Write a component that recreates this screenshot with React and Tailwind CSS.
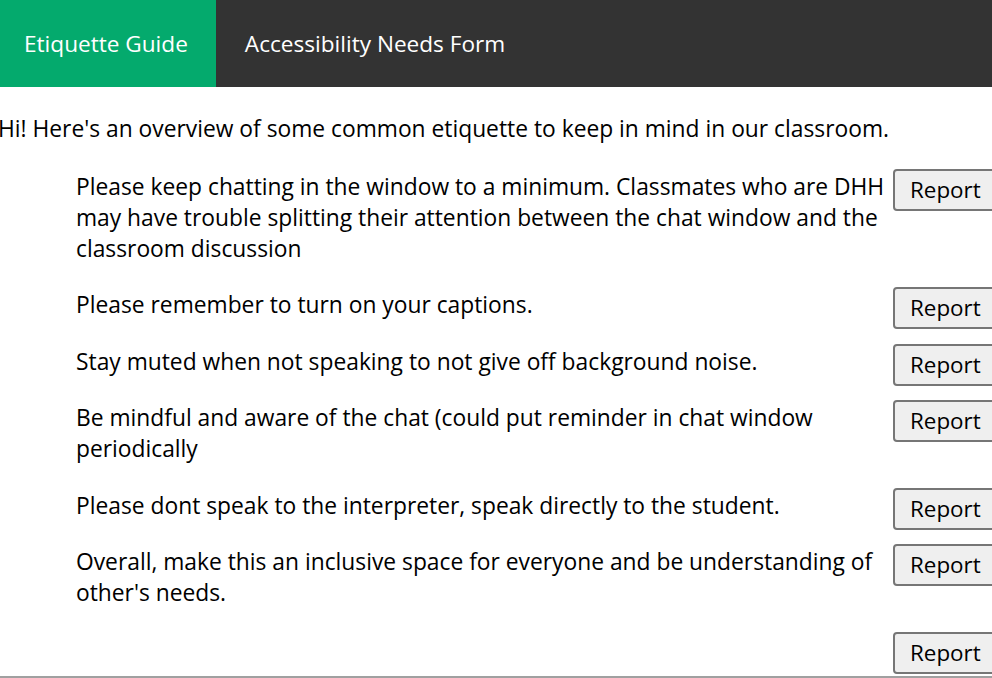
import React from 'react';

const rules = [
  "Please keep chatting in the window to a minimum. Classmates who are DHH may have trouble splitting their attention between the chat window and the classroom discussion",
  'Please remember to turn on your captions.',
  'Stay muted when not speaking to not give off background noise.',
  'Be mindful and aware of the chat (could put reminder in chat window periodically',
  'Please dont speak to the interpreter, speak directly to the student.',
  "Overall, make this an inclusive space for everyone and be understanding of other's needs.",
  '',
];

export default function App() {
  return (
    <div className="w-[992px] h-[678px] overflow-hidden bg-white text-black font-['Open_Sans',sans-serif]">
      <div className="ml-[-4px] w-[1000px]">
        <nav className="flex h-[87px] bg-[#333333]">
          <a className="flex items-center px-[28px] bg-[#04AA6D] text-white text-[22.6px]">Etiquette Guide</a>
          <a className="flex items-center px-[29px] text-white text-[22.6px]">Accessibility Needs Form</a>
        </nav>

        <p className="mt-[26px] pl-[2px] text-[22.8px] leading-[31px]">
          Hi! Here's an overview of some common etiquette to keep in mind in our classroom.
        </p>

        <ul className="mt-[26.5px] pl-[80px] flex flex-col gap-[25.5px]">
          {rules.map((text, i) => (
            <li key={i} className="flex items-start gap-[3px]">
              <p className="flex-1 text-[22.8px] leading-[31px]">{text}</p>
              <div className="h-[31px] shrink-0">
                <button className="mt-[-2px] h-[42px] w-[103px] border-2 border-[#767676] rounded-[4px] bg-[#efefef] text-[22.4px] text-left pl-[15px]">
                  Report
                </button>
              </div>
            </li>
          ))}
        </ul>
        <div className="mt-[11px] h-[2px] bg-[#a0a0a0]" />
      </div>
    </div>
  );
}
